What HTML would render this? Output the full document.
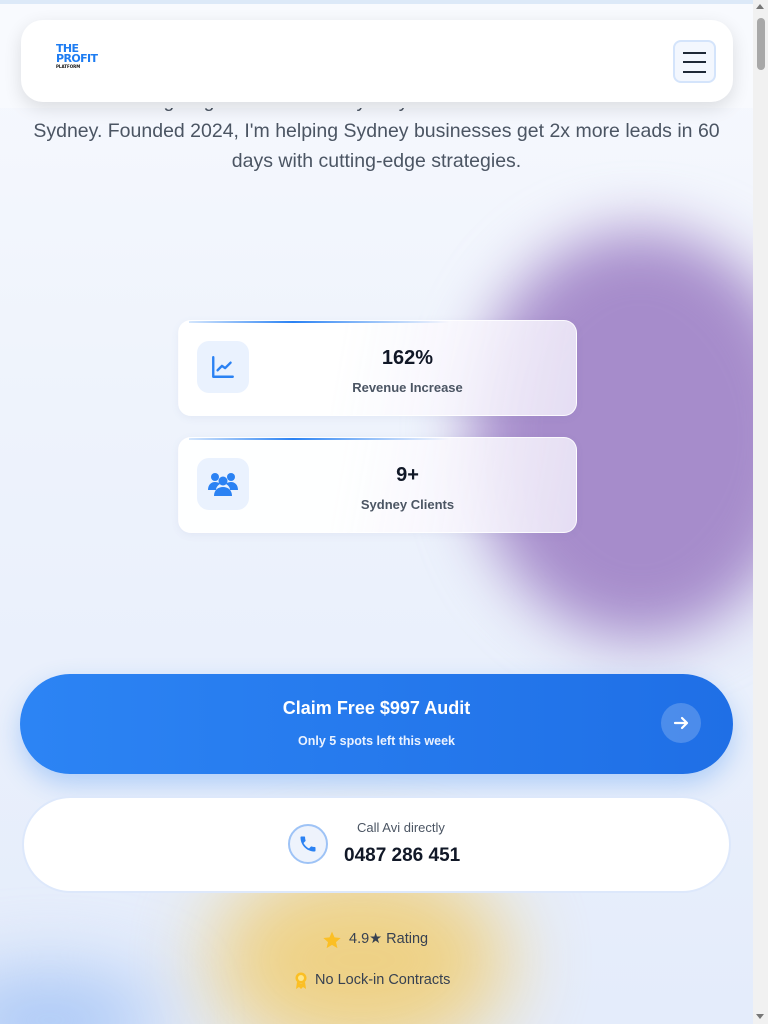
<!DOCTYPE html>
<html><head><meta charset="utf-8"><style>
*{margin:0;padding:0;box-sizing:border-box}
html,body{width:768px;height:1024px;overflow:hidden}
body{font-family:"Liberation Sans",sans-serif;background:#eef2fb;position:relative}
.page{position:absolute;left:0;top:0;width:753px;height:1024px;overflow:hidden;background:linear-gradient(180deg,#f7f9fe 0%,#eef3fc 40%,#e4ecfb 100%)}
.blob{position:absolute;border-radius:50%;filter:blur(40px)}
.sb{position:absolute;left:753px;top:0;width:15px;height:1024px;background:#f1f1f1}
.thumb{position:absolute;left:757px;top:18px;width:8px;height:52px;border-radius:4px;background:#a8a8a8}
.abs{position:absolute}
.card{position:absolute;left:178px;width:399px;height:96px;border-radius:13px;background:linear-gradient(100deg,rgba(255,255,255,.95) 40%,rgba(240,236,250,.85));border:1px solid rgba(255,255,255,.8);box-shadow:0 2px 8px rgba(100,110,160,.08);overflow:hidden}
.card:before{content:"";position:absolute;left:10px;top:0;width:260px;height:2px;background:linear-gradient(90deg,rgba(43,130,243,.2),#2b82f3 40%,rgba(43,130,243,0))}
.ib{position:absolute;left:18px;top:20px;width:52px;height:52px;border-radius:12px;background:#eaf2fe;display:flex;align-items:center;justify-content:center}
.num{position:absolute;left:0;right:0;padding-left:60px;text-align:center;font-weight:bold;font-size:20px;color:#111827}
.lab{position:absolute;left:0;right:0;padding-left:60px;text-align:center;font-weight:bold;font-size:13px;color:#4b5563}
</style></head><body>
<div class="page">
<div class="blob" style="left:470px;top:230px;width:340px;height:410px;background:#a68ccb;filter:blur(30px)"></div>
<div class="blob" style="left:210px;top:860px;width:300px;height:200px;background:#f0cf7a;opacity:.9"></div>
<div class="blob" style="left:-60px;top:980px;width:220px;height:80px;background:#9ec0f5"></div>
<div class="abs" style="left:0;top:0;width:753px;height:4px;background:#dce9f8"></div>
<div class="abs" style="left:0;top:86px;width:753px;line-height:30px;text-align:center;font-size:19.5px;color:#4b5563">giving businesses in Sydney and across Australia<br>Sydney. Founded 2024, I'm helping Sydney businesses get 2x more leads in 60<br>days with cutting-edge strategies.</div>
<div class="abs" style="left:0;top:4px;width:753px;height:104px;background:#f8fafe"></div>
<div class="abs" style="left:21px;top:20px;width:712px;height:82px;border-radius:22px;background:#fff;box-shadow:0 6px 18px rgba(0,0,0,.12)"></div>
<div class="abs" style="left:56px;top:44px;font-family:'DejaVu Sans',sans-serif;font-weight:bold;font-size:11px;line-height:10px;color:#1d7cf2;letter-spacing:-.6px">THE<br>PROFIT<div style="font-size:4px;line-height:6px;color:#111;letter-spacing:0">PLATFORM</div></div>
<div class="abs" style="left:673px;top:40px;width:43px;height:43px;border-radius:8px;background:#f3f7fe;border:2px solid #d4e4fb"></div>
<div class="abs" style="left:683px;top:52px;width:23px;height:1.5px;background:#1f2937"></div>
<div class="abs" style="left:683px;top:61px;width:23px;height:2px;background:#1f2937"></div>
<div class="abs" style="left:683px;top:71px;width:23px;height:1.5px;background:#1f2937"></div>

<div class="card" style="top:320px">
<div class="ib"><svg width="26" height="26" viewBox="0 0 24 24" fill="none" stroke="#2b82f3" stroke-width="2.2" stroke-linecap="round" stroke-linejoin="round"><path d="M3 3v18h18"/><path d="M7 15l4-4 3 2 5-5"/></svg></div>
<div class="num" style="top:26px">162%</div><div class="lab" style="top:59px">Revenue Increase</div></div>
<div class="card" style="top:437px">
<div class="ib"><svg width="32" height="26" viewBox="0 0 32 26" fill="#2b82f3"><circle cx="8" cy="6" r="4"/><circle cx="24" cy="6" r="4"/><circle cx="16" cy="10" r="4.5"/><path d="M1 19c0-5 3-8 7-8s5 2 5 2-4 2-4 6z"/><path d="M31 19c0-5-3-8-7-8s-5 2-5 2 4 2 4 6z"/><path d="M7 25c0-6 4-9 9-9s9 3 9 9z"/></svg></div>
<div class="num" style="top:26px">9+</div><div class="lab" style="top:59px">Sydney Clients</div></div>

<div class="abs" style="left:20px;top:674px;width:713px;height:100px;border-radius:50px;background:linear-gradient(90deg,#2c84f4,#1f6fe6);box-shadow:0 10px 25px rgba(43,130,243,.3)"></div>
<div class="abs" style="left:20px;top:698px;width:713px;text-align:center;color:#fff;font-weight:bold;font-size:18px">Claim Free $997 Audit</div>
<div class="abs" style="left:20px;top:734px;width:713px;text-align:center;color:#eaf2ff;font-weight:bold;font-size:12.5px">Only 5 spots left this week</div>
<div class="abs" style="left:661px;top:703px;width:40px;height:40px;border-radius:50%;background:rgba(255,255,255,.2)"></div>
<svg class="abs" style="left:671px;top:713px" width="20" height="20" viewBox="0 0 20 20" fill="none" stroke="#fff" stroke-width="2.2" stroke-linecap="round" stroke-linejoin="round"><path d="M4 10h12M11 5l5 5-5 5"/></svg>

<div class="abs" style="left:22px;top:796px;width:709px;height:97px;border-radius:49px;background:#fff;border:2px solid #dde8fb"></div>
<div class="abs" style="left:288px;top:824px;width:40px;height:40px;border-radius:50%;background:#eef3fc;border:2px solid #9ec3f6"></div>
<svg class="abs" style="left:298px;top:834px" width="20" height="20" viewBox="0 0 24 24" fill="#2b82f3"><path d="M6.6 10.8c1.4 2.8 3.8 5.1 6.6 6.6l2.2-2.2c.3-.3.7-.4 1-.2 1.1.4 2.3.6 3.6.6.6 0 1 .4 1 1V20c0 .6-.4 1-1 1C10.6 21 3 13.4 3 4c0-.6.4-1 1-1h3.5c.6 0 1 .4 1 1 0 1.3.2 2.5.6 3.6.1.3 0 .7-.2 1z"/></svg>
<div class="abs" style="left:357px;top:820px;font-size:13px;color:#4b5563">Call Avi directly</div>
<div class="abs" style="left:344px;top:845px;font-size:19px;font-weight:bold;color:#111827">0487 286 451</div>

<svg class="abs" style="left:322px;top:930px" width="20" height="20" viewBox="0 0 24 24" fill="#fbbf24"><path d="M12 2l3 6.9 7.4.7-5.6 4.9 1.7 7.3L12 17.9 5.5 21.8l1.7-7.3L1.6 9.6 9 8.9z"/></svg>
<div class="abs" style="left:349px;top:931px;font-size:14.5px;color:#374151">4.9★ Rating</div>
<svg class="abs" style="left:294px;top:972px" width="14" height="18" viewBox="0 0 14 18" fill="#fbbf24"><circle cx="7" cy="6" r="5.5"/><circle cx="7" cy="6" r="3" fill="#fde68a"/><path d="M3 10l-1 7 3-2 2 2 0-5zM11 10l1 7-3-2-2 2 0-5z"/></svg>
<div class="abs" style="left:315px;top:972px;font-size:14.5px;color:#374151">No Lock-in Contracts</div>
</div>
<div class="sb"></div><div class="thumb"></div>
<div class="abs" style="left:756px;top:4px;width:0;height:0;border-left:4px solid transparent;border-right:4px solid transparent;border-bottom:5px solid #777"></div>
<div class="abs" style="left:756px;top:1014px;width:0;height:0;border-left:4px solid transparent;border-right:4px solid transparent;border-top:5px solid #777"></div>
</body></html>
